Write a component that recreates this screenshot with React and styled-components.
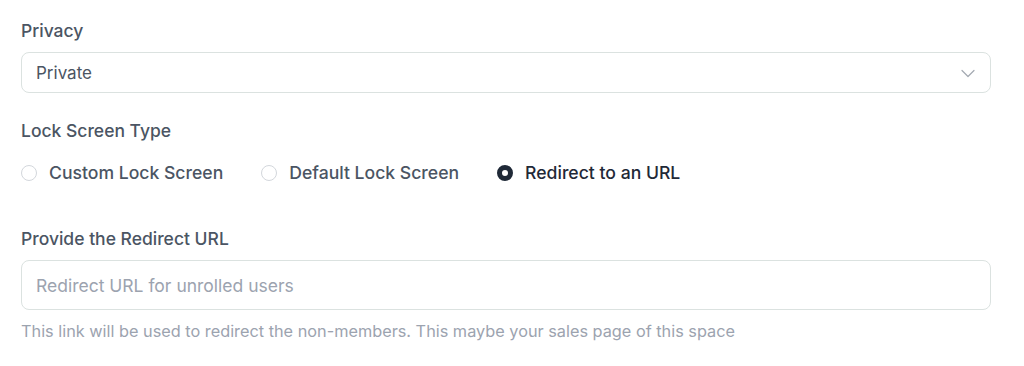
import { useState } from "react";
import styled, { createGlobalStyle } from "styled-components";

const GlobalStyle = createGlobalStyle`
  body {
    margin: 0;
    background: #ffffff;
    font-family: Inter, "Noto Sans", sans-serif;
  }
`;

const options = [
  { id: "custom", label: "Custom Lock Screen" },
  { id: "default", label: "Default Lock Screen" },
  { id: "redirect", label: "Redirect to an URL" },
];

const App = () => {
  const [lockType, setLockType] = useState("redirect");
  return (
    <>
      <GlobalStyle />
      <Page>
        <Field>
          <Label>Privacy</Label>
          <SelectBox>
            <SelectValue>Private</SelectValue>
            <svg width="16" height="16" viewBox="0 0 16 16" fill="none">
              <path
                d="M2 5.5l6 6 6-6"
                stroke="#a3a9b1"
                strokeWidth="1.2"
                strokeLinecap="round"
                strokeLinejoin="round"
              />
            </svg>
          </SelectBox>
        </Field>
        <Field>
          <Label>Lock Screen Type</Label>
          <RadioRow>
            {options.map((item) => (
              <RadioItem key={item.id} onClick={() => setLockType(item.id)}>
                <RadioDot $checked={lockType === item.id} />
                <RadioText $checked={lockType === item.id}>{item.label}</RadioText>
              </RadioItem>
            ))}
          </RadioRow>
        </Field>
        <Field $top={18}>
          <Label>Provide the Redirect URL</Label>
          <TextInput placeholder="Redirect URL for unrolled users" />
          <Hint>
            This link will be used to redirect the non-members. This maybe your
            sales page of this space
          </Hint>
        </Field>
      </Page>
    </>
  );
};
export default App;

const Page = styled.div`
  width: 970px;
  padding: 20px 0 0 21px;
  display: flex;
  flex-direction: column;
`;
const Field = styled.div`
  display: flex;
  flex-direction: column;
  margin-top: ${(p) => (p.$top ? p.$top : 0)}px;
  margin-bottom: 27px;
`;
const Label = styled.label`
  font-size: 17.5px;
  font-weight: 500;
  color: #4b5563;
  line-height: 22px;
  margin-bottom: 10px;
`;
const SelectBox = styled.div`
  height: 41px;
  box-sizing: border-box;
  border: 1px solid #dbe2e0;
  border-radius: 8px;
  display: flex;
  align-items: center;
  justify-content: space-between;
  padding: 0 14px 0 14px;
`;
const SelectValue = styled.span`
  font-size: 17px;
  color: #4b5563;
`;
const RadioRow = styled.div`
  display: flex;
  gap: 38px;
  margin-top: 10px;
  height: 21px;
`;
const RadioItem = styled.div`
  display: flex;
  align-items: center;
  gap: 12px;
  cursor: pointer;
`;
const RadioDot = styled.span`
  width: 16px;
  height: 16px;
  box-sizing: border-box;
  border-radius: 50%;
  border: ${(p) => (p.$checked ? "5px solid #1f2937" : "1px solid #d3d7dc")};
  background: #ffffff;
`;
const RadioText = styled.span`
  font-size: 17.6px;
  font-weight: 500;
  color: ${(p) => (p.$checked ? "#1f2937" : "#4b5563")};
`;
const TextInput = styled.input`
  height: 50px;
  box-sizing: border-box;
  border: 1px solid #dbe2e0;
  border-radius: 8px;
  padding: 0 14px;
  font-family: Inter, "Noto Sans", sans-serif;
  font-size: 17.5px;
  color: #374151;
  outline: none;
  &::placeholder {
    color: #9ca3af;
  }
`;
const Hint = styled.p`
  margin: 11px 0 0;
  font-size: 16.3px;
  line-height: 20px;
  color: #9ca3af;
`;
